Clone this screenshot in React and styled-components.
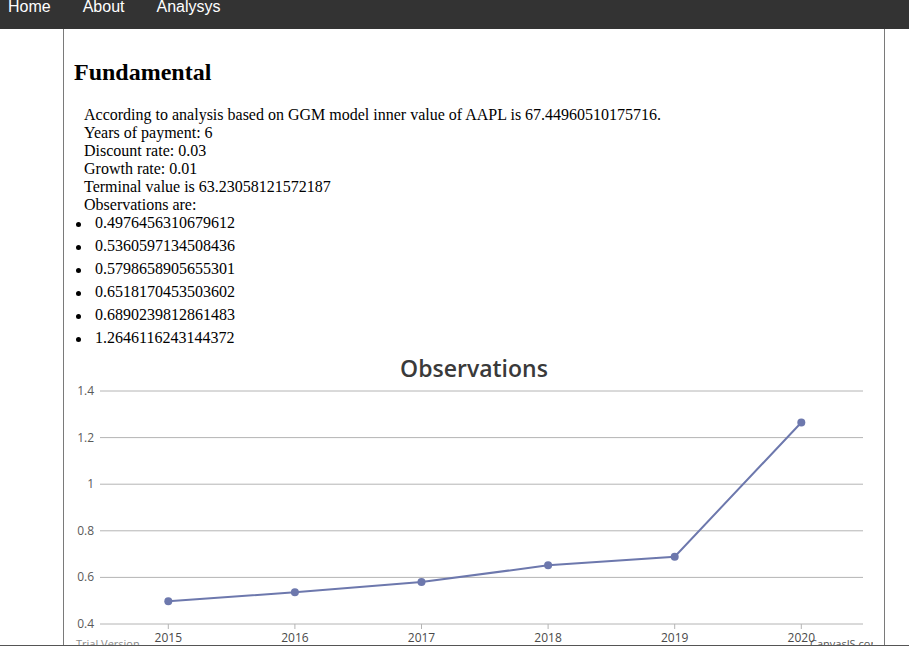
import React from "react";
import styled, { createGlobalStyle } from "styled-components";

const GlobalStyle = createGlobalStyle`
  html, body {
    margin: 0;
    padding: 0;
    height: 100%;
    overflow: hidden;
    background: #ffffff;
  }
  #root {
    height: 100%;
  }
`;

const Page = styled.div`
  display: flex;
  flex-direction: column;
  height: 100vh;
`;

const NavBar = styled.nav`
  background: #333333;
  height: 29px;
  flex-shrink: 0;
  display: flex;
  flex-direction: row;
  align-items: flex-start;
  gap: 32px;
  padding-left: 8px;
  overflow: hidden;
`;

const NavLink = styled.a`
  color: #ffffff;
  font-family: "Liberation Sans", Arial, sans-serif;
  font-size: 16px;
  line-height: 18px;
  margin-top: -2px;
  text-decoration: none;
`;

const Main = styled.main`
  flex: 1;
  min-height: 0;
  overflow: hidden;
`;

const Container = styled.section`
  box-sizing: border-box;
  width: 822px;
  min-height: 100%;
  margin-left: 63px;
  padding: 30px 11px 0 11px;
  border-left: 1px solid #7a7a7a;
  border-right: 1px solid #7a7a7a;
  font-family: "Liberation Serif", "Times New Roman", serif;
  color: #000000;
`;

const Title = styled.h2`
  margin: 0 0 0 -1px;
  font-size: 24px;
  font-weight: 700;
`;

const Summary = styled.div`
  margin-top: 20px;
  padding-left: 9px;
  font-size: 16px;
  line-height: 18px;
`;

const ObservationList = styled.ul`
  margin: 0;
  padding: 0;
  list-style: none;
  font-size: 16px;
`;

const ObservationItem = styled.li`
  line-height: 18px;
  margin-bottom: 5px;

  &::before {
    content: "";
    display: inline-block;
    width: 5px;
    height: 5px;
    border-radius: 50%;
    background: #000000;
    vertical-align: middle;
    margin: 0 14.5px 0 0.5px;
  }

  &:last-child {
    margin-bottom: 4px;
  }
`;

const ChartSvg = styled.svg`
  display: block;
  font-family: "Open Sans", "DejaVu Sans", sans-serif;
`;

const Footer = styled.footer`
  flex-shrink: 0;
  height: 2px;
  box-sizing: border-box;
  border-top: 1px solid #555555;
`;

const observations = [
  0.4976456310679612, 0.5360597134508436, 0.5798658905655301,
  0.6518170453503602, 0.6890239812861483, 1.2646116243144372,
];
const years = [2015, 2016, 2017, 2018, 2019, 2020];
const ticks = [1.4, 1.2, 1, 0.8, 0.6, 0.4];

const yOf = (v) => 273 - ((v - 0.4) / 0.2) * 46.6;
const xOf = (i) => 93.3 + 126.6 * i;

const ObservationsChart = () => {
  const points = observations.map((v, i) => `${xOf(i)},${yOf(v)}`).join(" ");
  return (
    <ChartSvg width="798" height="300" viewBox="0 0 798 300">
      <text x="399" y="26" textAnchor="middle" fontSize="23" fontWeight="600" fill="#3a3a3a">
        Observations
      </text>
      {ticks.map((t) => (
        <g key={t}>
          <line x1="25" x2="788" y1={yOf(t)} y2={yOf(t)} stroke="#b4b4b4" strokeWidth="1" />
          <text x="19" y={yOf(t) + 4} textAnchor="end" fontSize="12" fill="#5a5a5a">
            {t}
          </text>
        </g>
      ))}
      {years.map((y, i) => (
        <g key={y}>
          <line x1={xOf(i)} x2={xOf(i)} y1="273" y2="278" stroke="#b4b4b4" />
          <text x={xOf(i)} y="291" textAnchor="middle" fontSize="12" fill="#4a4a4a">
            {y}
          </text>
        </g>
      ))}
      <polyline points={points} fill="none" stroke="#6d78ad" strokeWidth="2" />
      {observations.map((v, i) => (
        <circle key={i} cx={xOf(i)} cy={yOf(v)} r="4" fill="#6d78ad" />
      ))}
      <text x="1" y="297" fontSize="11" fill="#8a8a8a">Trial Version</text>
      <text x="735" y="297" fontSize="11" fill="#555555">CanvasJS.com</text>
    </ChartSvg>
  );
};

export default function App() {
  return (
    <Page>
      <GlobalStyle />
      <NavBar>
        <NavLink href="#">Home</NavLink>
        <NavLink href="#">About</NavLink>
        <NavLink href="#">Analysys</NavLink>
      </NavBar>
      <Main>
        <Container>
          <Title>Fundamental</Title>
          <Summary>
            <div>According to analysis based on GGM model inner value of AAPL is 67.44960510175716.</div>
            <div>Years of payment: 6</div>
            <div>Discount rate: 0.03</div>
            <div>Growth rate: 0.01</div>
            <div>Terminal value is 63.23058121572187</div>
            <div>Observations are:</div>
          </Summary>
          <ObservationList>
            {observations.map((v) => (
              <ObservationItem key={v}>{v}</ObservationItem>
            ))}
          </ObservationList>
          <ObservationsChart />
        </Container>
      </Main>
      <Footer />
    </Page>
  );
}
